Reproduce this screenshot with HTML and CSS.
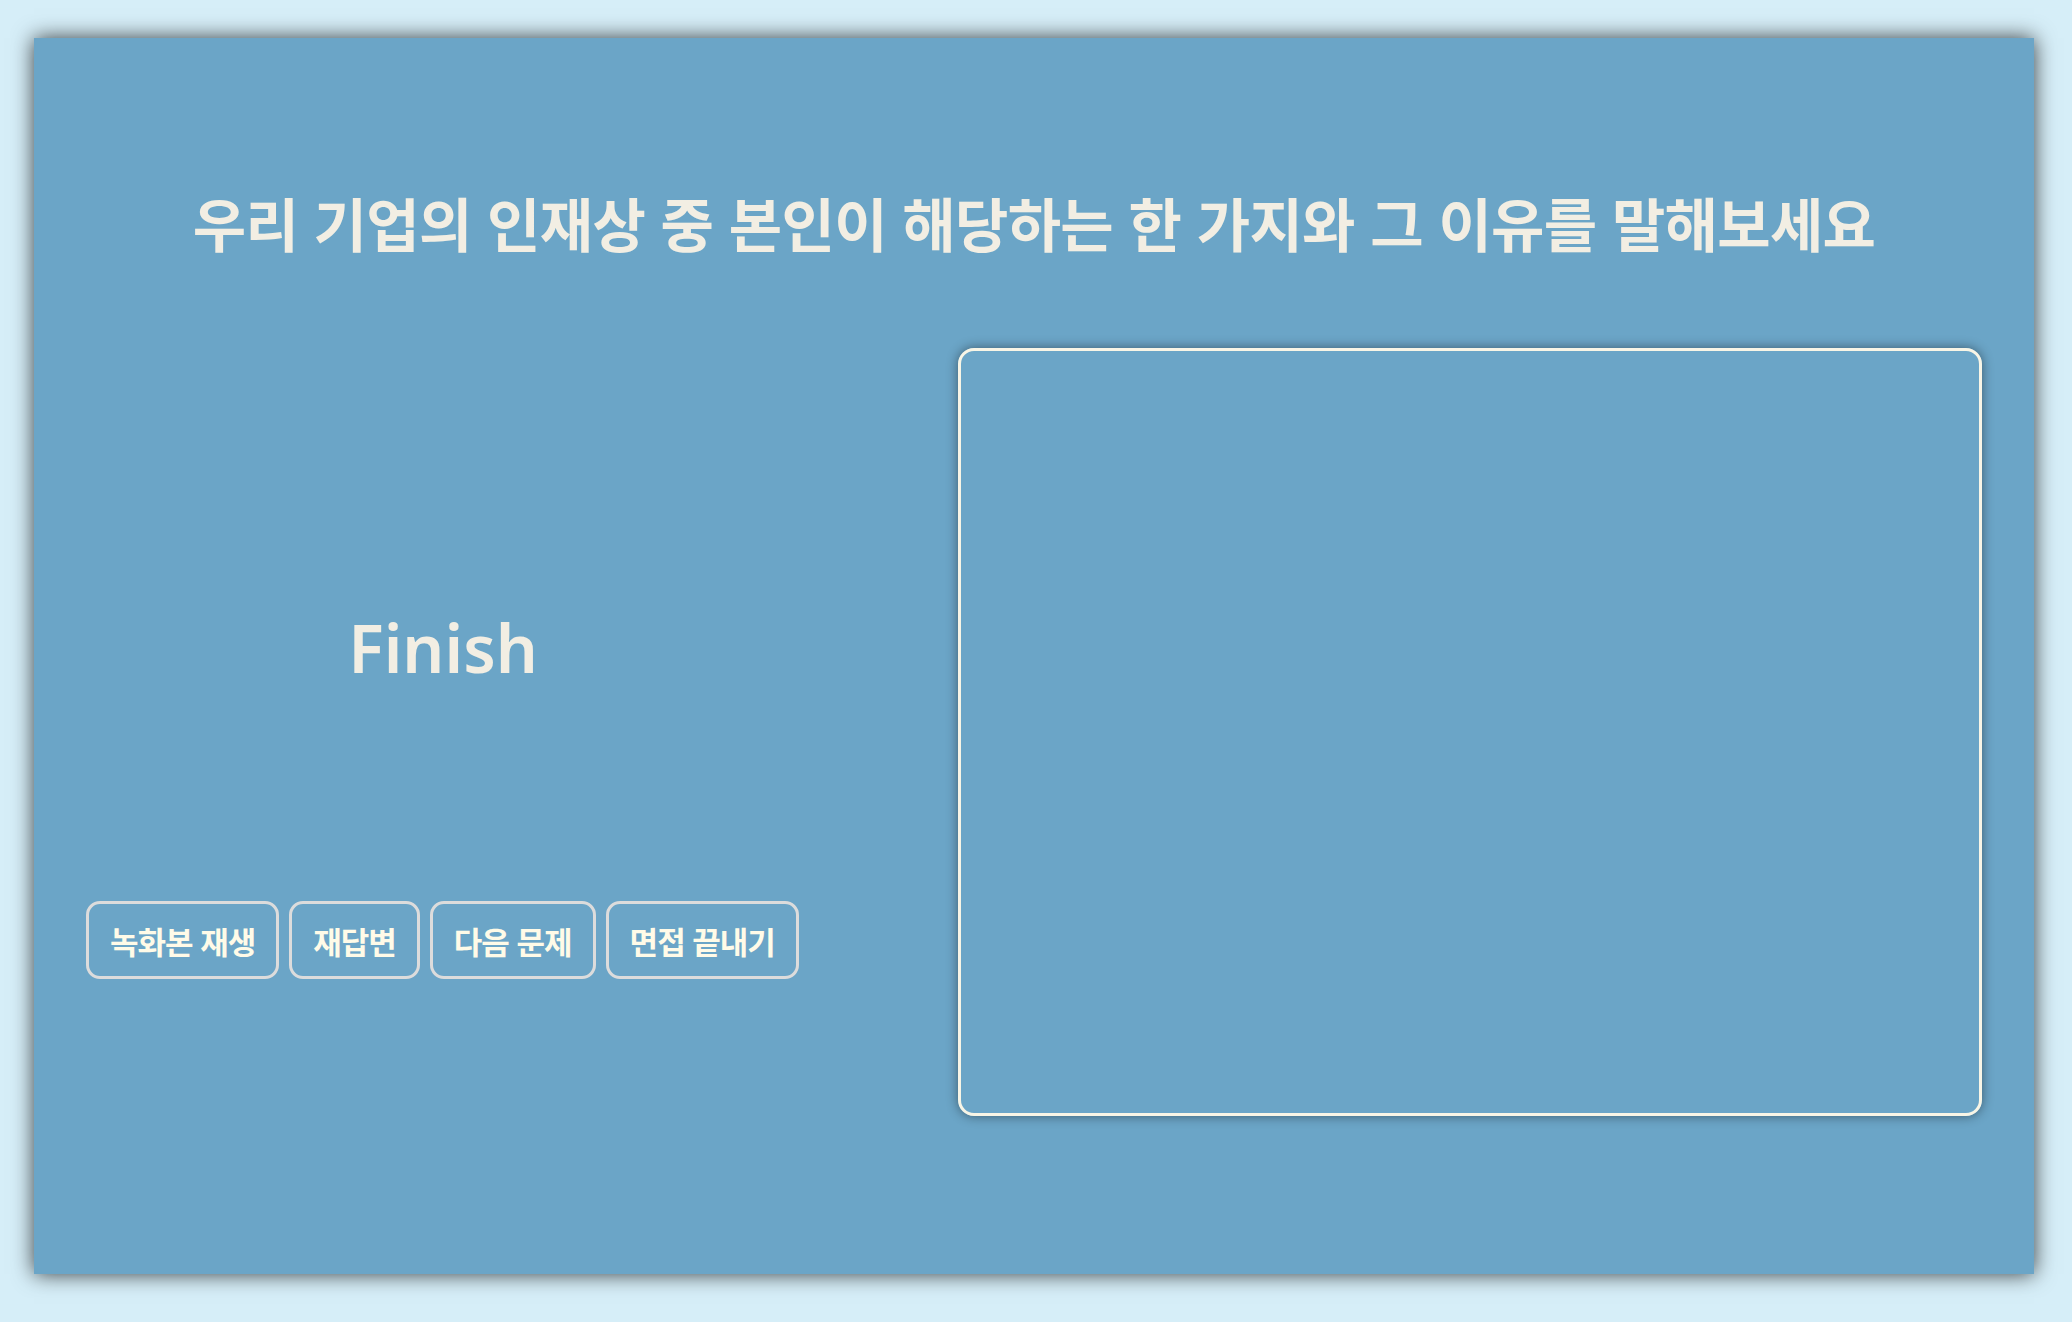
FILE: index.html
```html
<!DOCTYPE html>
<html lang="ko">
<head>
<meta charset="utf-8">
<title>Interview</title>
<link rel="stylesheet" href="styles.css">
</head>
<body>
  <main class="card">
    <h1 class="question">우리 기업의 인재상 중 본인이 해당하는 한 가지와 그 이유를 말해보세요</h1>
    <section class="content">
      <div class="left">
        <div class="status">Finish</div>
        <div class="actions">
          <button class="btn">녹화본 재생</button>
          <button class="btn">재답변</button>
          <button class="btn">다음 문제</button>
          <button class="btn">면접 끝내기</button>
        </div>
      </div>
      <div class="video"></div>
    </section>
  </main>
</body>
</html>
```
FILE: styles.css
```css
html {
  background: #d6eef8;
}
body {
  margin: 0;
  padding: 38px 38px 48px 34px;
  font-family: "Noto Sans CJK KR", "Noto Sans", sans-serif;
}
.card {
  width: 2000px;
  height: 1236px;
  box-sizing: border-box;
  background: #6ba5c7;
  box-shadow: 0 0 20px rgba(0, 0, 0, 0.75);
  padding: 0 52px;
  display: flex;
  flex-direction: column;
}
.question {
  margin: 142px 0 0;
  text-align: center;
  color: #f2eee3;
  font-size: 58px;
  font-weight: 700;
  line-height: 84px;
  letter-spacing: -0.7px;
}
.content {
  display: flex;
  gap: 158px;
  margin-top: 84px;
}
.left {
  width: 714px;
  display: flex;
  flex-direction: column;
}
.status {
  margin-top: 259px;
  text-align: center;
  color: #f2eee3;
  font-family: "Noto Sans", sans-serif;
  font-weight: 600;
  font-size: 66px;
  line-height: 80px;
}
.actions {
  display: flex;
  gap: 10px;
  margin-top: 214px;
}
.btn {
  height: 78px;
  box-sizing: border-box;
  padding: 0 21px;
  background: transparent;
  border: 3px solid #dcdcdc;
  border-radius: 14px;
  color: #fffbe8;
  font-family: "Noto Sans CJK KR", sans-serif;
  font-weight: 700;
  font-size: 31px;
  letter-spacing: -1px;
}
.video {
  width: 1024px;
  height: 768px;
  box-sizing: border-box;
  border: 3px solid #f8f5e6;
  border-radius: 16px;
  box-shadow: 0 0 12px rgba(0, 0, 0, 0.45);
}
```
